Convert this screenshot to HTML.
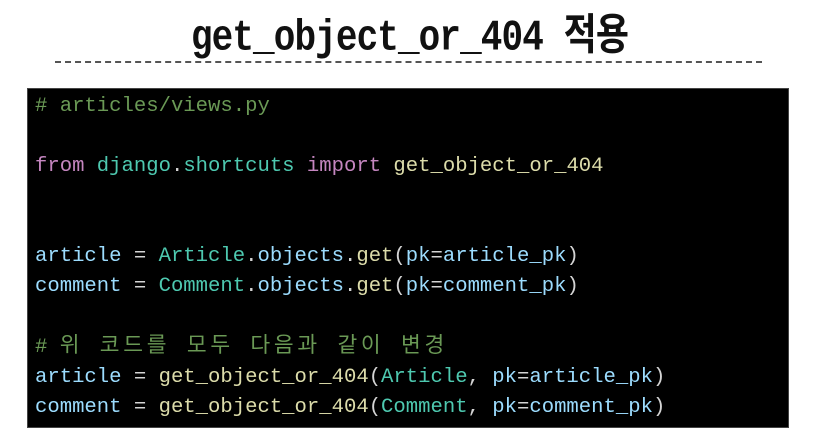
<!DOCTYPE html>
<html><head><meta charset="utf-8"><style>
body{margin:0;width:819px;height:441px;background:#fff;overflow:hidden;position:relative}
h1{position:absolute;top:2px;left:0;width:819px;margin:0;text-align:center;font:bold 40px "Liberation Mono","Noto Sans CJK KR",monospace;color:#111;transform:scale(0.9,1.08);letter-spacing:-1px}
.dash{position:absolute;left:55px;top:61px;width:707px;border-top:2px dashed #555}
.code{position:absolute;left:27px;top:88px;width:762px;height:340px;background:#000;border:1px solid #444;box-sizing:border-box}
pre{margin:0;position:absolute;left:7px;top:3px;font:20.6px/30px "Liberation Mono","Noto Sans CJK KR",monospace;color:#d4d4d4}
.c{color:#6a9955}.k{color:#c586c0}.t{color:#4ec9b0}.f{color:#dcdcaa}.v{color:#9cdcfe}
.ko{letter-spacing:3.7px;font-size:21.5px}
</style></head><body>
<h1>get_object_or_404 적용</h1>
<div class="dash"></div>
<div class="code"><pre><span class="c"># articles/views.py</span>

<span class="k">from</span> <span class="t">django</span>.<span class="t">shortcuts</span> <span class="k">import</span> <span class="f">get_object_or_404</span>


<span class="v">article</span> = <span class="t">Article</span>.<span class="v">objects</span>.<span class="f">get</span>(<span class="v">pk</span>=<span class="v">article_pk</span>)
<span class="v">comment</span> = <span class="t">Comment</span>.<span class="v">objects</span>.<span class="f">get</span>(<span class="v">pk</span>=<span class="v">comment_pk</span>)

<span class="c"># <span class="ko">위 코드를 모두 다음과 같이 변경</span></span>
<span class="v">article</span> = <span class="f">get_object_or_404</span>(<span class="t">Article</span>, <span class="v">pk</span>=<span class="v">article_pk</span>)
<span class="v">comment</span> = <span class="f">get_object_or_404</span>(<span class="t">Comment</span>, <span class="v">pk</span>=<span class="v">comment_pk</span>)</pre></div>
</body></html>
